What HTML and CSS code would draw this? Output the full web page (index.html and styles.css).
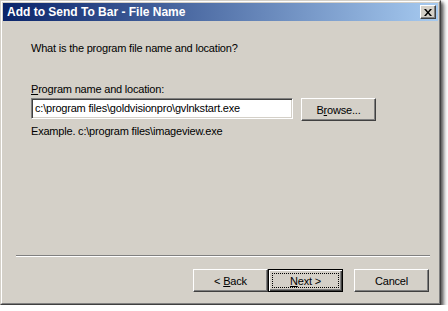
FILE: index.html
```html
<!DOCTYPE html>
<html>
<head>
    <title>Add to Send To Bar - File Name</title>
    <link rel="stylesheet" href="styles.css">
</head>
<body>
    <div class="window">
        <div class="title-bar">
            <span class="title-text">Add to Send To Bar - File Name</span>
            <button class="close-button">
                <svg width="8" height="7" viewBox="0 0 8 7">
                    <path d="M0 0h2l2 2.5 2-2.5h2l-3 3.5 3 3.5h-2l-2-2.5-2 2.5h-2l3-3.5z" fill="#000"/>
                </svg>
            </button>
        </div>
        <div class="content">
            <p class="question">What is the program file name and location?</p>
            <label class="field-label"><u>P</u>rogram name and location:</label>
            <div class="field-row">
                <div class="text-input">c:\program files\goldvisionpro\gvlnkstart.exe</div>
                <button class="win-button browse-button">B<u>r</u>owse...</button>
            </div>
            <p class="example">Example. c:\program files\imageview.exe</p>
        </div>
        <div class="separator"></div>
        <div class="button-row">
            <button class="win-button">&lt; <u>B</u>ack</button>
            <button class="win-button default-button"><span class="focus-box"><u>N</u>ext &gt;</span></button>
            <button class="win-button cancel-button">Cancel</button>
        </div>
    </div>
</body>
</html>
```

FILE: styles.css
```css
body {
    margin: 0;
    background-color: #ffffff;
    font-family: "Liberation Sans", Arial, sans-serif;
    font-size: 11px;
    letter-spacing: -0.2px;
    color: #000;
}
.window {
    width: 441px;
    height: 305px;
    box-sizing: border-box;
    background-color: #d4d0c8;
    border-top: 1px solid #d4d0c8;
    border-left: 1px solid #d4d0c8;
    border-right: 1px solid #404040;
    border-bottom: 1px solid #404040;
    box-shadow: 2px 2px 3px rgba(0, 0, 0, 0.55), 4px 4px 4px rgba(0, 0, 0, 0.25);
    display: flex;
    flex-direction: column;
    padding: 1px 2px 2px 1px;
    position: relative;
}
.window::before {
    content: "";
    position: absolute;
    inset: 0;
    border-top: 1px solid #fff;
    border-left: 1px solid #fff;
    border-right: 1px solid #808080;
    border-bottom: 1px solid #808080;
    pointer-events: none;
}
.title-bar {
    height: 18px;
    margin: 1px 0 0 1px;
    background: linear-gradient(to right, #0a246a, #a6caf0);
    display: flex;
    align-items: center;
    justify-content: space-between;
    padding: 0 2px 0 4px;
}
.title-text {
    color: #fff;
    font-family: "Liberation Sans", Arial, sans-serif;
    font-weight: bold;
    font-size: 12px;
    letter-spacing: 0;
}
.close-button {
    width: 16px;
    height: 14px;
    padding: 0;
    background-color: #d4d0c8;
    border: 1px solid;
    border-color: #fff #404040 #404040 #fff;
    box-shadow: inset -1px -1px 0 #808080;
    display: flex;
    align-items: center;
    justify-content: center;
}
.content {
    padding: 0 0 0 29px;
    flex: 1;
}
.question {
    margin: 21px 0 0 0;
}
.field-label {
    display: block;
    margin-top: 29px;
}
.field-row {
    display: flex;
    margin-top: 3px;
    gap: 8px;
}
.text-input {
    width: 262px;
    height: 21px;
    box-sizing: border-box;
    background-color: #fff;
    border: 1px solid;
    border-color: #808080 #fff #fff #808080;
    box-shadow: inset 1px 1px 0 #404040, inset -1px -1px 0 #d4d0c8;
    padding: 3px 0 0 3px;
    white-space: nowrap;
}
.win-button {
    width: 75px;
    height: 23px;
    box-sizing: border-box;
    background-color: #d4d0c8;
    font-family: "Liberation Sans", Arial, sans-serif;
    font-size: 11px;
    letter-spacing: -0.2px;
    color: #000;
    border: 1px solid;
    border-color: #fff #404040 #404040 #fff;
    box-shadow: inset -1px -1px 0 #808080;
    padding: 0;
}
.example {
    margin: 4px 0 0 0;
}
.separator {
    margin: 0 8px 0 14px;
    border-top: 1px solid #808080;
    border-bottom: 1px solid #fff;
}
.button-row {
    display: flex;
    justify-content: flex-end;
    padding: 12px 9px 10px 0;
}
.default-button {
    border: 1px solid #000;
    box-shadow: inset 1px 1px 0 #fff, inset -1px -1px 0 #404040, inset -2px -2px 0 #808080;
    padding: 3px;
}
.focus-box {
    display: flex;
    align-items: center;
    justify-content: center;
    height: 100%;
    border: 1px dotted #000;
    box-sizing: border-box;
}
.cancel-button {
    margin-left: 11px;
}
```
